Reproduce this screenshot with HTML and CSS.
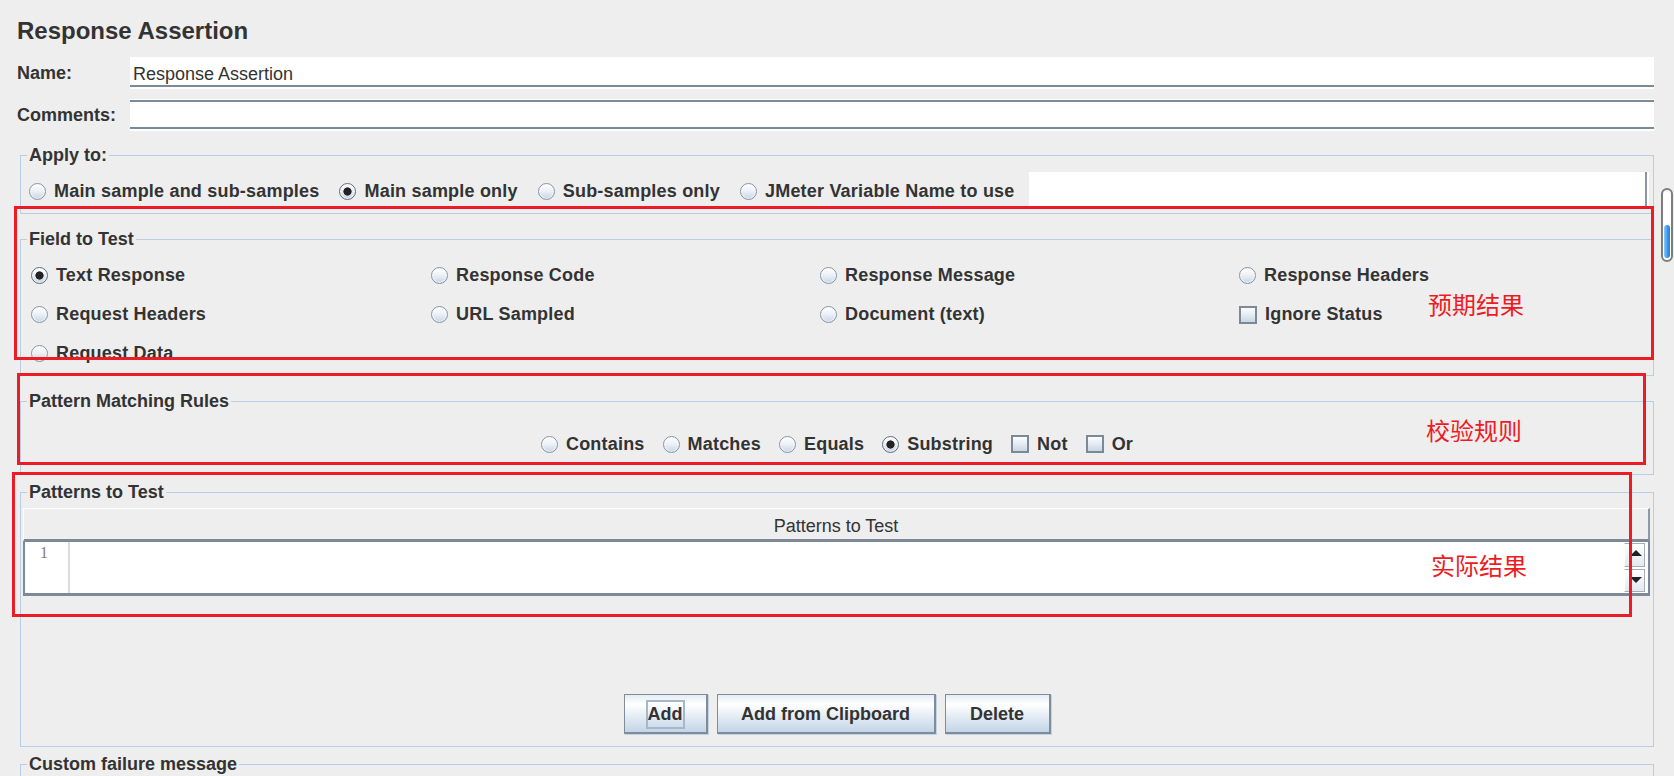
FILE: index.html
```html
<!DOCTYPE html>
<html>
    <head>
        <title>Response Assertion</title>
        <meta charset="UTF-8">
        <link rel="stylesheet" href="styles.css">
    </head>
    <body>
        <div class="page">
            <h1 class="title">Response Assertion</h1>

            <div class="row row-name">
                <span class="lbl">Name:</span>
                <div class="field field-name">Response Assertion</div>
            </div>
            <div class="row">
                <span class="lbl">Comments:</span>
                <div class="field field-comments"></div>
            </div>

            <fieldset class="box box-apply">
                <legend>Apply to:</legend>
                <div class="apply-row">
                    <span class="opt"><i class="radio"></i>Main sample and sub-samples</span>
                    <span class="opt"><i class="radio on"></i>Main sample only</span>
                    <span class="opt"><i class="radio"></i>Sub-samples only</span>
                    <span class="opt"><i class="radio"></i>JMeter Variable Name to use</span>
                    <div class="field field-var"></div>
                </div>
            </fieldset>

            <fieldset class="box box-field">
                <legend>Field to Test</legend>
                <div class="field-grid">
                    <span class="opt"><i class="radio on"></i>Text Response</span>
                    <span class="opt"><i class="radio"></i>Response Code</span>
                    <span class="opt"><i class="radio"></i>Response Message</span>
                    <span class="opt"><i class="radio"></i>Response Headers</span>
                    <span class="opt"><i class="radio"></i>Request Headers</span>
                    <span class="opt"><i class="radio"></i>URL Sampled</span>
                    <span class="opt"><i class="radio"></i>Document (text)</span>
                    <span class="opt"><i class="check"></i>Ignore Status</span>
                    <span class="opt"><i class="radio"></i>Request Data</span>
                </div>
            </fieldset>

            <fieldset class="box box-rules">
                <legend>Pattern Matching Rules</legend>
                <div class="rules-row">
                    <span class="opt"><i class="radio"></i>Contains</span>
                    <span class="opt"><i class="radio"></i>Matches</span>
                    <span class="opt"><i class="radio"></i>Equals</span>
                    <span class="opt"><i class="radio on"></i>Substring</span>
                    <span class="opt"><i class="check"></i>Not</span>
                    <span class="opt"><i class="check"></i>Or</span>
                </div>
            </fieldset>

            <fieldset class="box box-patterns">
                <legend>Patterns to Test</legend>
                <div class="grid">
                    <div class="grid-head">Patterns to Test</div>
                    <div class="grid-body">
                        <div class="gutter">1</div>
                        <div class="editor"></div>
                        <div class="spin">
                            <span class="spin-btn up"></span>
                            <span class="spin-btn down"></span>
                        </div>
                    </div>
                </div>
                <div class="buttons">
                    <button class="btn btn-add"><span class="focus">Add</span></button>
                    <button class="btn btn-clip">Add from Clipboard</button>
                    <button class="btn btn-del">Delete</button>
                </div>
            </fieldset>

            <fieldset class="box box-failure">
                <legend>Custom failure message</legend>
            </fieldset>
        </div>

        <!-- scroll thumb of the outer pane -->
        <div class="thumb"></div>

        <!-- hand-drawn notes -->
        <div class="mark mark-field"></div>
        <div class="mark mark-rules"></div>
        <div class="mark mark-patterns"></div>
        <div class="note note-field">预期结果</div>
        <div class="note note-rules">校验规则</div>
        <div class="note note-patterns">实际结果</div>
    </body>
</html>
```

FILE: styles.css
```css
html, body{
    margin: 0;
    height: 776px;
    overflow: hidden;
}
body{
    background: #eeeeee;
    color: #333;
    font-family: "Liberation Sans", Arial, sans-serif;
    font-size: 18px;
}
.page{
    padding: 17px 20px 0 17px;
}
.title{
    margin: 0;
    font-size: 24px;
    line-height: 28px;
    font-weight: bold;
}

/* name / comments rows */
.row{
    display: flex;
    align-items: center;
    height: 32px;
    margin-top: 10px;
}
.row-name{
    margin-top: 12px;
}
.lbl{
    flex: none;
    width: 113px;
    padding-top: 1px;
    font-weight: bold;
}
.field{
    flex: 1;
    align-self: stretch;
    display: flex;
    align-items: center;
    box-sizing: border-box;
    padding: 2px 0 0 3px;
    background: #fff;
}
.field-name{
    box-shadow: inset 0 -2px #fff, inset 0 -4px #7b8a98;
}
.field-comments{
    box-shadow: inset 0 1px #fff, inset 0 3px #7b8a98, inset 0 -2px #fff, inset 0 -4px #7b8a98;
}

/* titled panels */
.box{
    margin: 14px 0 0 3px;
    padding: 0;
    border: 1px solid #b8cee4;
    min-width: 0;
}
.box legend{
    margin-left: 6px;
    padding: 0 2px;
    font-weight: bold;
    line-height: 22px;
}
.box-apply{
    margin-top: 13px;
}
.box-patterns, .box-failure{
    margin-top: 6px;
}
.box-failure{
    height: 40px;
}

.opt{
    display: flex;
    align-items: center;
    font-weight: bold;
    letter-spacing: .2px;
    white-space: nowrap;
}
.radio, .check{
    flex: none;
    box-sizing: border-box;
    width: 17px;
    height: 17px;
    margin-right: 8px;
}
.radio{
    border-radius: 50%;
    border: 1px solid #8595a5;
    background: linear-gradient(#fdfdfd, #eef2f7 45%, #c7d5e4);
    box-shadow: inset 0 0 0 1px rgba(255,255,255,.6);
}
.radio.on{
    border-color: #5f6d7b;
    background: radial-gradient(circle, #222 0 3.8px, transparent 4.4px), linear-gradient(#fdfdfd, #e9eef4 45%, #c7d5e4);
}
.check{
    width: 18px;
    height: 18px;
    border: 2px solid #7c8a98;
    background: linear-gradient(#fbfcfe, #e6edf4 45%, #c9d6e4);
}

.apply-row{
    display: flex;
    align-items: center;
    gap: 20px;
    height: 35px;
    padding: 6px 4px 6px 8px;
}
.apply-row .opt{
    margin-top: 4px;
}
.field-var{
    margin-left: -6px;
    padding: 0;
    box-shadow: inset -2px 0 #fff, inset -4px 0 #8a96a2;
}

.field-grid{
    display: grid;
    grid-template-columns: 400px 389px 419px 1fr;
    grid-auto-rows: 39px;
    align-items: center;
    padding: 6px 0 2px 10px;
}

.rules-row{
    display: flex;
    justify-content: center;
    align-items: center;
    gap: 18px;
    height: 26px;
    padding: 19px 0 17px;
}

/* patterns table */
.grid{
    margin: 5px 3px 0 2px;
}
.grid-head{
    box-sizing: border-box;
    height: 34px;
    padding-top: 2px;
    line-height: 30px;
    text-align: center;
    border-top: 1px solid #fff;
    border-left: 1px solid #fff;
    border-right: 2px solid #8d9aa6;
    border-bottom: 3px solid #7d8996;
}
.grid-body{
    display: flex;
    height: 51px;
    background: #fff;
    border-left: 2px solid #7d8996;
    border-right: 2px solid #7d8996;
    border-bottom: 3px solid #7d8996;
}
.gutter{
    box-sizing: border-box;
    width: 45px;
    padding: 1px 0 0 15px;
    border-right: 2px solid #dcdcdc;
    font-family: "Liberation Serif", "Times New Roman", serif;
    font-size: 16px;
    line-height: 20px;
    color: #8a7a70;
}
.editor{
    flex: 1;
}
.spin{
    display: flex;
    flex-direction: column;
    gap: 2px;
    width: 21px;
    margin-right: 3px;
    padding: 1px 0;
}
.spin-btn{
    flex: 1;
    position: relative;
    border: 1px solid #a3aeb9;
    border-left-color: #fff;
    background: linear-gradient(#fff, #e3e9f0);
}
.spin-btn::before{
    content: "";
    position: absolute;
    left: 5px;
    border-left: 6px solid transparent;
    border-right: 6px solid transparent;
}
.up::before{
    top: 6px;
    border-bottom: 6px solid #222;
}
.down::before{
    bottom: 8px;
    border-top: 6px solid #222;
}

.buttons{
    display: flex;
    justify-content: center;
    gap: 9px;
    margin-top: 98px;
    padding-bottom: 12px;
}
.btn{
    box-sizing: border-box;
    height: 40px;
    padding: 2px 0 0;
    font-family: inherit;
    font-size: 18px;
    font-weight: bold;
    white-space: nowrap;
    color: #333;
    border: 1px solid #7f8c99;
    border-right-width: 2px;
    border-bottom-width: 2px;
    background: linear-gradient(#e4ecf4, #fff 25%, #e2ebf4 60%, #c3d5e8);
    box-shadow: 1px 1px 0 #c3d3e4;
}
.btn-add{ width: 84px; }
.btn-clip{ width: 219px; }
.btn-del{ width: 106px; }
.focus{
    display: inline-block;
    line-height: 25px;
    padding: 0;
    border: 2px solid #a5b7cb;
    margin: 0 -1px;
}

.thumb{
    position: absolute;
    left: 1661px;
    top: 188px;
    width: 12px;
    height: 74px;
    box-sizing: border-box;
    border: 2px solid #7d7d7d;
    border-radius: 6px;
    background: #fff;
}
.thumb::after{
    content: "";
    position: absolute;
    left: 1px;
    right: 1px;
    top: 35px;
    bottom: 2px;
    border-radius: 3px;
    background: linear-gradient(to right, #8cc8f8, #3b95e6 60%, #2a7fd4);
}

.mark{
    position: absolute;
    border: 3px solid #ed1c24;
}
.mark-field{ left: 14px; top: 206px; width: 1634px; height: 148px; }
.mark-rules{ left: 17px; top: 373px; width: 1623px; height: 86px; }
.mark-patterns{ left: 12px; top: 472px; width: 1614px; height: 139px; }

.note{
    position: absolute;
    font-family: "Noto Sans CJK SC", sans-serif;
    font-size: 24px;
    line-height: 24px;
    color: #ed1c24;
}
.note-field{ left: 1428px; top: 292px; }
.note-rules{ left: 1426px; top: 418px; }
.note-patterns{ left: 1431px; top: 553px; }
```
